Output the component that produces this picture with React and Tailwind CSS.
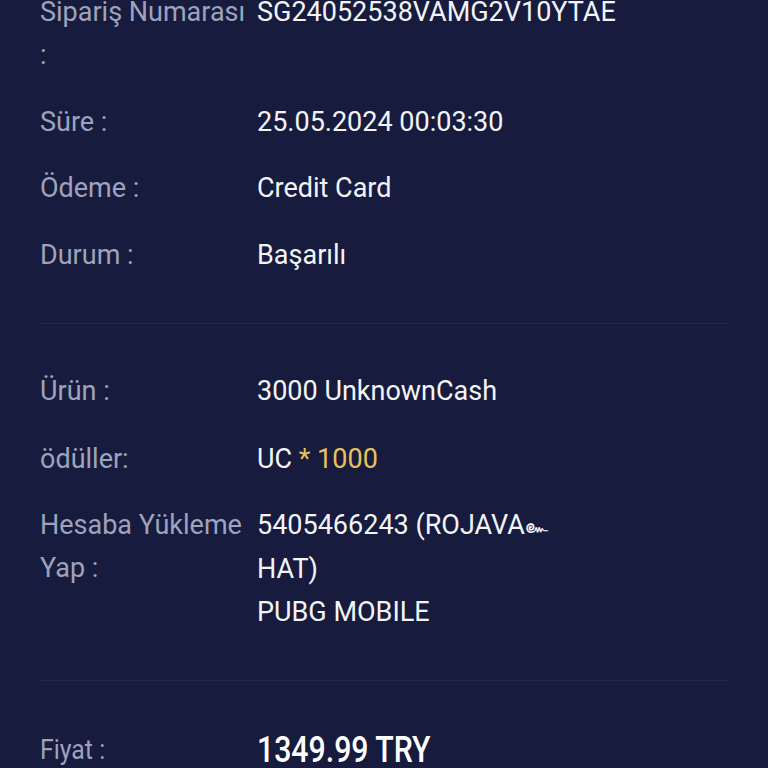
const rows1 = [
  { label: <>Sipariş Numarası<br />:</>, value: 'SG24052538VAMG2V10YTAE' },
  { label: 'Süre :', value: '25.05.2024 00:03:30' },
  { label: 'Ödeme :', value: 'Credit Card' },
  { label: 'Durum :', value: 'Başarılı' },
]

const rows2 = [
  { label: 'Ürün :', value: '3000 UnknownCash' },
  {
    label: 'ödüller:',
    value: (
      <>
        UC <span className="text-[#e9c15c]">* 1000</span>
      </>
    ),
    extra: 'mt-[2px]',
  },
  {
    label: <>Hesaba Yükleme<br />Yap :</>,
    value: (
      <>
        5405466243 (ROJAVA<span className="text-[20px] align-middle">๛</span>
        <br />
        HAT)
        <br />
        PUBG MOBILE
      </>
    ),
  },
]

function Row({ label, value, extra = '' }) {
  return (
    <div className={`grid grid-cols-[217px_1fr] leading-[43px] text-[27px] ${extra}`}>
      <div className="text-[#9ea3bb]">{label}</div>
      <div className="text-[#f3f4f8]">{value}</div>
    </div>
  )
}

export default function App() {
  return (
    <div
      className="min-h-[768px] h-[768px] overflow-hidden bg-[#171c3e] px-10"
      style={{ fontFamily: 'Roboto, "Noto Sans", sans-serif' }}
    >
      <div className="-mt-[9px]">
        <section className="flex flex-col gap-[23.5px] pb-[46px] border-b border-[#21284d]">
          {rows1.map((r, i) => (
            <Row key={i} {...r} />
          ))}
        </section>
        <section className="flex flex-col gap-[23px] pt-[46px] pb-[46px] border-b border-[#21284d]">
          {rows2.map((r, i) => (
            <Row key={i} {...r} />
          ))}
        </section>
        <section className="pt-[48px]">
          <div className="grid grid-cols-[217px_1fr] items-center leading-[43px]">
            <div className="text-[#9ea3bb] text-[27px]">
              <span className="inline-block origin-left scale-x-[0.92]">Fiyat :</span>
            </div>
            <div className="text-white text-[36px] font-medium">
              <span className="inline-block origin-left scale-x-[0.84]">1349.99 TRY</span>
            </div>
          </div>
        </section>
      </div>
    </div>
  )
}
